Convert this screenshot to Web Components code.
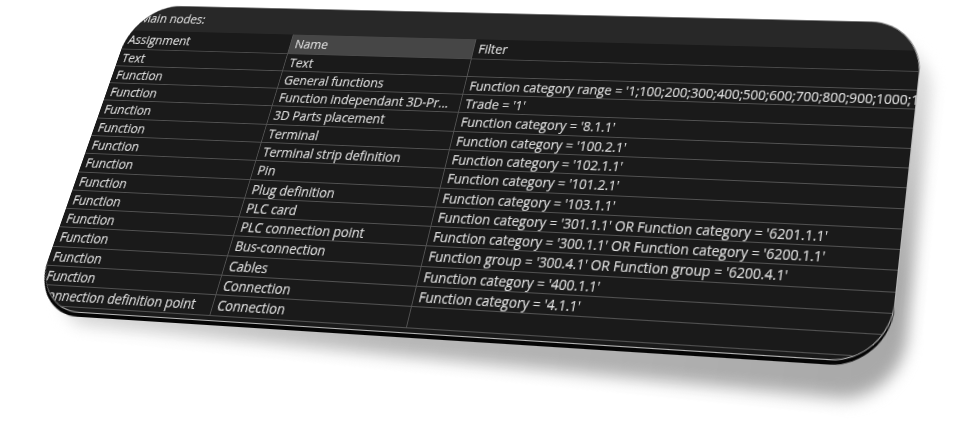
<!DOCTYPE html>
<html>
<head>
<meta charset="utf-8">
<title>Main nodes</title>
<style>
html, body {
  margin: 0;
  background: #fff;
  overflow: hidden;
}
</style>
</head>
<body>
<tilted-stage>
  <node-panel heading="Main nodes:">
    <node-row header assignment="Assignment" name="Name" filter="Filter"></node-row>
    <node-row assignment="Text" name="Text" filter=""></node-row>
    <node-row assignment="Function" name="General functions" filter="Function category range = '1;100;200;300;400;500;600;700;800;900;1000;11"></node-row>
    <node-row assignment="Function" name="Function independant 3D-Pr..." filter="Trade = '1'"></node-row>
    <node-row assignment="Function" name="3D Parts placement" filter="Function category = '8.1.1'"></node-row>
    <node-row assignment="Function" name="Terminal" filter="Function category = '100.2.1'"></node-row>
    <node-row assignment="Function" name="Terminal strip definition" filter="Function category = '102.1.1'"></node-row>
    <node-row assignment="Function" name="Pin" filter="Function category = '101.2.1'"></node-row>
    <node-row assignment="Function" name="Plug definition" filter="Function category = '103.1.1'"></node-row>
    <node-row assignment="Function" name="PLC card" filter="Function category = '301.1.1' OR Function category = '6201.1.1'"></node-row>
    <node-row assignment="Function" name="PLC connection point" filter="Function category = '300.1.1' OR Function category = '6200.1.1'"></node-row>
    <node-row assignment="Function" name="Bus-connection" filter="Function group = '300.4.1' OR Function group = '6200.4.1'"></node-row>
    <node-row assignment="Function" name="Cables" filter="Function category = '400.1.1'"></node-row>
    <node-row assignment="Function" name="Connection" filter="Function category = '4.1.1'"></node-row>
    <node-row assignment="Connection definition point" name="Connection" filter=""></node-row>
  </node-panel>
</tilted-stage>

<script>
const PANEL_W = 900;
const PANEL_H = 342;

// rect (0,0,w,h) -> four screen corners, TL TR BR BL
function quadMatrix(w, h, [[x0, y0], [x1, y1], [x2, y2], [x3, y3]]) {
  const dx1 = x1 - x2, dx2 = x3 - x2, sx = x0 - x1 + x2 - x3;
  const dy1 = y1 - y2, dy2 = y3 - y2, sy = y0 - y1 + y2 - y3;
  const den = dx1 * dy2 - dx2 * dy1;
  const g = (sx * dy2 - dx2 * sy) / den;
  const k = (dx1 * sy - sx * dy1) / den;
  const a = x1 - x0 + g * x1, b = x3 - x0 + k * x3;
  const d = y1 - y0 + g * y1, e = y3 - y0 + k * y3;
  return `matrix3d(${a / w},${d / w},0,${g / w},${b / h},${e / h},0,${k / h},0,0,1,0,${x0},${y0},0,1)`;
}

const $stageTemplate = document.createElement("template");
$stageTemplate.innerHTML = `
<style>
:host {
  display: block;
  width: 964px;
  height: 439px;
  position: relative;
  overflow: hidden;
}

.shadow {
  position: absolute;
  left: 0;
  top: 0;
  width: ${PANEL_W}px;
  height: ${PANEL_H}px;
  border-radius: 56px;
  transform-origin: 0 0;
  background:
    linear-gradient(180deg, rgba(255, 255, 255, 0.75), rgba(255, 255, 255, 0) 70%),
    linear-gradient(90deg, #dcdcdc, #b8b8b8 45%, #a8a8a8);
  filter: blur(7px);
}

.sheet {
  width: ${PANEL_W}px;
  height: ${PANEL_H}px;
  transform-origin: 0 0;
  filter: blur(0.45px);
}
</style>
<div class="shadow"></div>
<div class="sheet"><slot></slot></div>
`;

class TiltedStage extends HTMLElement {
  constructor() {
    super();
    const shadowRoot = this.attachShadow({ mode: "open" });
    shadowRoot.appendChild($stageTemplate.content.cloneNode(true));
    shadowRoot.querySelector(".sheet").style.transform = quadMatrix(PANEL_W, PANEL_H, [
      [136.5, 5.7], [925, 23.5], [889, 364], [30.6, 309.8],
    ]);
    shadowRoot.querySelector(".shadow").style.transform = quadMatrix(PANEL_W, PANEL_H, [
      [170, 20], [936, 40], [901, 404], [44, 322],
    ]);
  }
}

const $panelTemplate = document.createElement("template");
$panelTemplate.innerHTML = `
<style>
:host {
  display: block;
  position: relative;
  width: 100%;
  height: 100%;
  box-sizing: border-box;
  background: #1a1a1a;
  color: #e0e0e0;
  font: 14px "Open Sans", "Noto Sans", sans-serif;
  -webkit-text-stroke: 0.1px #e0e0e0;
  border: solid #b8b8b8;
  border-width: 0 1px 1px 0;
  border-radius: 56px;
  box-shadow: 0 4px 0 #050505, 0 -1px 0 #777;
}

.clip {
  height: 100%;
  border-radius: 56px;
  overflow: hidden;
}

.heading {
  height: 30px;
  line-height: 30px;
  padding-left: 11px;
  background: #282828;
}
</style>
<div class="clip">
  <div class="heading"></div>
  <slot></slot>
</div>
`;

class NodePanel extends HTMLElement {
  constructor() {
    super();
    const shadowRoot = this.attachShadow({ mode: "open" });
    shadowRoot.appendChild($panelTemplate.content.cloneNode(true));
    shadowRoot.querySelector(".heading").textContent = this.getAttribute("heading");
  }
}

const $rowTemplate = document.createElement("template");
$rowTemplate.innerHTML = `
<style>
:host {
  display: grid;
  grid-template-columns: 202px 214px 1fr;
  height: 20.3px;
  box-sizing: border-box;
  border-bottom: 1px solid #525252;
  line-height: 19px;
  white-space: nowrap;
}

:host([header]) {
  height: 22.5px;
  border-bottom-color: #4a4a4a;
  line-height: 22px;
}

:host([header]) .name {
  background: #464646;
}

.cell {
  padding-left: 5px;
  overflow: hidden;
  min-width: 0;
}

.name,
.filter {
  border-left: 1px solid #525252;
}
</style>
<div class="cell assignment"></div>
<div class="cell name"></div>
<div class="cell filter"></div>
`;

class NodeRow extends HTMLElement {
  constructor() {
    super();
    const shadowRoot = this.attachShadow({ mode: "open" });
    shadowRoot.appendChild($rowTemplate.content.cloneNode(true));
    ["assignment", "name", "filter"].forEach((key) => {
      shadowRoot.querySelector("." + key).textContent = this.getAttribute(key);
    });
  }
}

customElements.define("tilted-stage", TiltedStage);
customElements.define("node-panel", NodePanel);
customElements.define("node-row", NodeRow);
</script>
</body>
</html>
